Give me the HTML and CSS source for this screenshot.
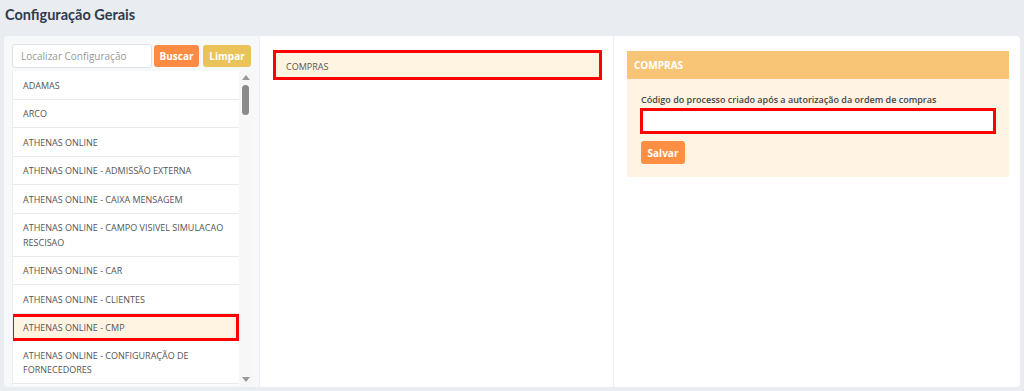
FILE: index.html
```html
<!DOCTYPE html>
<html lang="pt-BR">
<head>
  <meta charset="UTF-8">
  <meta name="viewport" content="width=device-width, initial-scale=1.0">
  <title>Configuração Gerais</title>
  <link rel="stylesheet" href="styles.css">
</head>
<body>
  <h1 class="page-title">Configuração Gerais</h1>

  <div class="card">
    <!-- left: search + list -->
    <div class="col-list">
      <div class="search-row">
        <input class="search-input" type="text" placeholder="Localizar Configuração">
        <button class="btn btn-buscar">Buscar</button>
        <button class="btn btn-limpar">Limpar</button>
      </div>

      <div class="list-box">
        <ul class="config-list">
          <li>ADAMAS</li>
          <li>ARCO</li>
          <li>ATHENAS ONLINE</li>
          <li>ATHENAS ONLINE - ADMISSÃO EXTERNA</li>
          <li>ATHENAS ONLINE - CAIXA MENSAGEM</li>
          <li>ATHENAS ONLINE - CAMPO VISIVEL SIMULACAO RESCISAO</li>
          <li>ATHENAS ONLINE - CAR</li>
          <li>ATHENAS ONLINE - CLIENTES</li>
          <li class="selected">ATHENAS ONLINE - CMP</li>
          <li>ATHENAS ONLINE - CONFIGURAÇÃO DE FORNECEDORES</li>
        </ul>
        <div class="scrollbar">
          <span class="arrow-up"></span>
          <span class="thumb"></span>
          <span class="track"></span>
          <span class="arrow-down"></span>
        </div>
      </div>
    </div>

    <!-- middle: groups -->
    <div class="col-groups">
      <div class="group-item">COMPRAS</div>
    </div>

    <!-- right: form -->
    <div class="col-form">
      <div class="panel">
        <div class="panel-head">COMPRAS</div>
        <div class="panel-body">
          <label class="field-label">Código do processo criado após a autorização da ordem de compras</label>
          <input class="field-input" type="text">
          <button class="btn btn-salvar">Salvar</button>
        </div>
      </div>
    </div>
  </div>
</body>
</html>
```

FILE: styles.css
```css
body {
  margin: 0;
  background: #e9ecf0;
  font-family: 'Open Sans', 'Noto Sans', sans-serif;
  color: #555;
  height: 391px;
  overflow: hidden;
}

.page-title {
  margin: 0;
  padding: 6px 5px 0;
  height: 30px;
  font-family: 'Lato', 'Open Sans', sans-serif;
  font-size: 14.5px;
  font-weight: 700;
  color: #2f3b4b;
}

.card {
  display: flex;
  margin: 0 4px;
  height: 351px;
  background: #fff;
  border-radius: 4px;
  overflow: hidden;
}

/* left column */
.col-list {
  width: 255px;
  flex-shrink: 0;
  background: #f7f8fa;
  padding: 8px 0 0 8px;
  box-sizing: border-box;
  display: flex;
  flex-direction: column;
}

.search-row {
  display: flex;
  align-items: center;
  height: 24px;
  margin-bottom: 3px;
}

.search-input {
  width: 140px;
  height: 24px;
  box-sizing: border-box;
  border: 1px solid #dfe2e6;
  border-radius: 3px;
  padding: 0 8px;
  font-family: inherit;
  font-size: 10px;
  color: #555;
  background: #fff;
  outline: none;
}

.search-input::placeholder {
  color: #999;
}

.btn {
  border: none;
  border-radius: 3px;
  color: #fff;
  font-family: inherit;
  font-size: 10px;
  font-weight: 700;
  cursor: pointer;
  padding: 0;
}

.btn-buscar {
  width: 45px;
  height: 22px;
  margin-left: 2px;
  background: #fd8b44;
}

.btn-limpar {
  width: 48px;
  height: 22px;
  margin-left: 4px;
  background: #eac35a;
}

.list-box {
  display: flex;
  height: 314px;
  width: 240px;
}

.config-list {
  list-style: none;
  margin: 0;
  padding: 0;
  width: 227px;
  background: #fff;
  overflow: hidden;
  border-left: 1px solid #eceef1;
  box-sizing: border-box;
}

.config-list li {
  padding: 7.5px 6px 5.5px 10px;
  font-size: 9px;
  line-height: 14.5px;
  border-bottom: 1px solid #e8e9ec;
  color: #555;
}

.config-list li.selected {
  background: #fff4e2;
  border: 3px solid #f00;
  margin-left: -2px;
  padding: 4.5px 6px 2.5px 9px;
}

.scrollbar {
  width: 13px;
  background: #f7f7f8;
  display: flex;
  flex-direction: column;
  align-items: center;
}

.arrow-up,
.arrow-down {
  width: 0;
  height: 0;
  border-left: 4px solid transparent;
  border-right: 4px solid transparent;
}

.arrow-up {
  margin-top: 4px;
  border-bottom: 5px solid #9a9a9a;
}

.arrow-down {
  margin-bottom: 3px;
  border-top: 5px solid #9a9a9a;
}

.thumb {
  width: 7px;
  height: 30px;
  margin-top: 5px;
  background: #8a8a8a;
  border-radius: 4px;
}

.track {
  flex: 1;
}

/* middle column */
.col-groups {
  width: 354px;
  flex-shrink: 0;
  border-left: 1px solid #eceef1;
  padding: 14px 11px 0 13px;
  box-sizing: border-box;
}

.group-item {
  background: #fff4e2;
  border: 3px solid #f00;
  height: 30px;
  box-sizing: border-box;
  padding: 3px 10px 0;
  display: flex;
  align-items: center;
  font-size: 9px;
  color: #555;
}

/* right column */
.col-form {
  flex: 1;
  border-left: 1px solid #eceef1;
  padding: 15px 11px 0 13px;
}

.panel-head {
  background: #f8c577;
  color: #fff;
  font-size: 10px;
  font-weight: 700;
  height: 28px;
  display: flex;
  align-items: center;
  padding: 0 7px;
}

.panel-body {
  background: #fff4e3;
  padding: 14px 12px 13px 14px;
  display: flex;
  flex-direction: column;
  align-items: flex-start;
}

.field-label {
  font-size: 9px;
  font-weight: 600;
  color: #454545;
  line-height: 13px;
  margin-bottom: 2px;
}

.field-input {
  width: 100%;
  height: 26px;
  margin-left: -1px;
  box-sizing: border-box;
  border: 3px solid #f00;
  background: #fff;
  outline: none;
}

.btn-salvar {
  margin-top: 7px;
  width: 44px;
  height: 23px;
  background: #fd8f45;
}
```
